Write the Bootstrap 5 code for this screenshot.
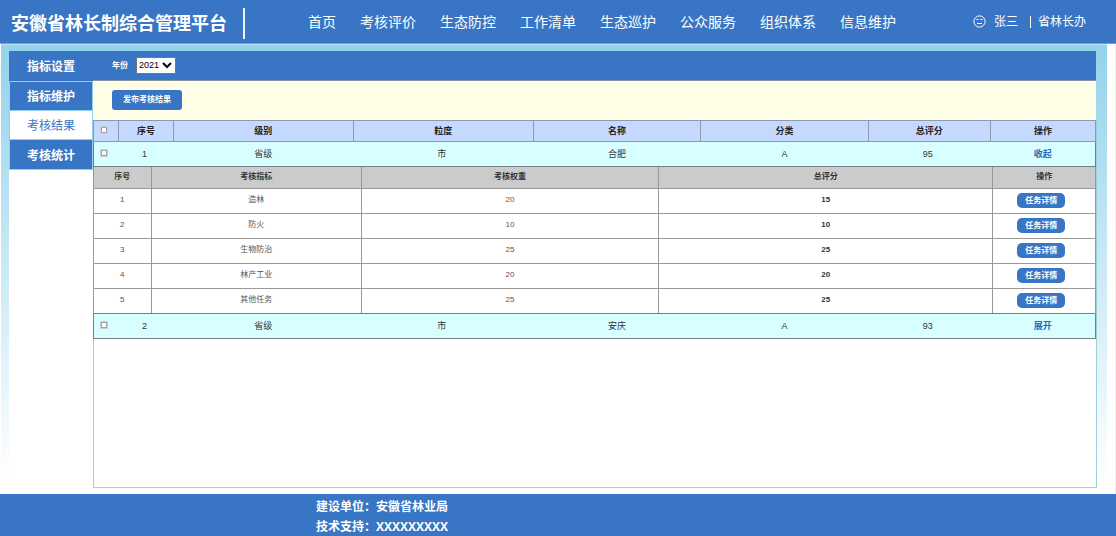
<!DOCTYPE html>
<html lang="zh-CN">
<head>
<meta charset="utf-8">
<meta name="viewport" content="width=device-width, initial-scale=1">
<title>安徽省林长制综合管理平台</title>
<link href="https://cdn.jsdelivr.net/npm/bootstrap@5.3.0/dist/css/bootstrap.min.css" rel="stylesheet">
<style>
  :root { --brand: #3876c5; --line: #777c80; }
  body { font-family: "Liberation Sans", "Noto Sans CJK SC", sans-serif; font-size: 9px; line-height: 12px; color: #333; }
  a { text-decoration: none; }
  .brand-bg { background: var(--brand); color: #fff; }

  .site-header { height: 44px; border-bottom: 1px solid #8a9bb5; padding: 0 30px 0 11px; }
  .site-title { font-size: 18px; line-height: 24px; font-weight: 700; margin: 5px 0 0; }
  .title-rule { width: 2px; height: 31px; background: #eaf4ff; margin: 3px 63px 0 16px; }
  .main-nav { gap: 24px; font-size: 14px; line-height: 20px; }
  .main-nav a { color: #fff; white-space: nowrap; }
  .user-info { font-size: 12px; line-height: 16px; white-space: nowrap; }
  .user-rule { width: 1px; height: 12px; background: #fff; margin: 0 7px 0 12px; }

  .stage { background: linear-gradient(#93d3ec, #fff 97%); border-top: 1px solid #b9e1f1; margin: 0 8px 0 1px; padding: 6px 11px 6px 8px; }
  .page-edge { border-right: 1px solid #eee; }
  .side-menu { width: 84px; background: #fff; font-size: 12px; line-height: 16px; }
  .side-menu a { display: flex; align-items: center; justify-content: center; height: 29px; padding-top: 2px; font-weight: 700; color: #fff; background: var(--brand); border: 1px solid #93cfee; border-top-width: 0; }
  .side-menu a:first-child { border-color: var(--brand) var(--brand) #93cfee; height: 31px; }
  .side-menu a.current { background: #fff; color: var(--brand); font-weight: 400; }
  .side-menu a:last-child { height: 30px; }

  .content-pane { min-width: 0; background: #fff; }
  .filter-bar { height: 30px; padding: 0 19px; gap: 8px; border-bottom: 1px solid #8793a0; }
  .filter-bar label { font-size: 8px; font-weight: 700; }
  .filter-bar select { appearance: none; width: 40px; height: 17px; font-size: 9px; line-height: 15px; padding: 0 2px; border: 1px solid #777; color: #000;
    background: #fff url("data:image/svg+xml,%3Csvg xmlns='http://www.w3.org/2000/svg' viewBox='0 0 10 7' fill='none' stroke='%23000' stroke-width='2'%3E%3Cpath d='M1 1l4 4 4-4'/%3E%3C/svg%3E") no-repeat right 3px center / 10px 7px; }
  .tool-bar { height: 39px; background: #ffffe8; padding: 0 19px 2px; }
  .publish-btn { font-size: 8px; line-height: 12px; font-weight: 700; color: #fff; background: var(--brand); border: 0; border-radius: 3px; padding: 4px 10px; width: 70px; height: 20px; white-space: nowrap; }
  .results { border: solid #9dd0dc; border-width: 0 1px 1px; margin-right: -1px; }

  .grid-table { width: 100%; table-layout: fixed; border-collapse: collapse; text-align: center; }
  .grid-table th, .grid-table td { padding: 0; vertical-align: middle; }
  .outer-table { margin: 0 0 0 -1px; width: calc(100% + 1px); }
  .outer-table > thead th { height: 21px; background: #c5d9ff; border: 1px solid #8f99ad; color: #222; }
  .group-row > td { height: 25px; background: #d8ffff; border: solid var(--line); border-width: 1px 0; }
  .group-row > td:first-child { border-left-width: 1px; }
  .group-row > td:last-child { border-right-width: 1px; }
  .outer-table .group-row .num { padding-right: 3px; }
  .group-row a { color: #2a6abf; font-weight: 700; }
  .outer-table .detail-cell { border: solid #999; border-width: 0 1px; }
  .inner-table { font-size: 8px; color: #555; background: #fff; }
  .inner-table th { height: 21px; background: #cbcbcb; color: #333; }
  .inner-table td { height: 25px; }
  .inner-table tbody td { padding-bottom: 1px; }
  .inner-table th, .inner-table td { border: 1px solid #999; }
  .inner-table thead th { border-top: 0; }
  .inner-table tbody tr:last-child td { border-bottom: 0; }
  .inner-table tr > :first-child { border-left: 0; }
  .inner-table tr > :last-child { border-right: 0; }
  .inner-table .total-score { font-weight: 700; color: #333; }
  .inner-table tbody td:last-child { padding-right: 6px; }
  .detail-btn { display: block; width: 48px; height: 15px; margin: 0 auto; padding: 0; font-size: 8px; line-height: 15px; color: #fff; background: var(--brand); border: 0; border-radius: 5px; font-weight: 700; }
  .pick { appearance: none; display: block; width: 6px; height: 6px; margin: 0 0 3px 7px; background: #fff; border: 1px solid #a3a3a3; box-shadow: 0 0 0 1px #cdd1d1; }
  .pick:checked { background: var(--brand); }

  .w-pick { width: 2.5%; } .w-no { width: 5.5%; } .w-level { width: 17.9%; } .w-grain { width: 18%; }
  .w-name { width: 16.7%; } .w-kind { width: 16.7%; } .w-score { width: 12.2%; } .w-act { width: 10.5%; }
  .n-no { width: 5.7%; } .n-item { width: 21%; } .n-weight { width: 29.7%; } .n-score { width: 33.4%; } .n-act { width: 10.2%; }

  .site-footer { height: 42px; padding: 4px 0 0 316px; font-size: 12px; line-height: 19px; font-weight: 700; }
  .site-footer span { font-family: "Open Sans", sans-serif; }
</style>
</head>
<body class="d-flex flex-column min-vh-100 bg-white">

<header class="site-header brand-bg d-flex align-items-center">
  <h1 class="site-title text-nowrap">安徽省林长制综合管理平台</h1>
  <div class="title-rule"></div>
  <nav class="main-nav d-flex">
    <a href="#">首页</a>
    <a href="#">考核评价</a>
    <a href="#">生态防控</a>
    <a href="#">工作清单</a>
    <a href="#">生态巡护</a>
    <a href="#">公众服务</a>
    <a href="#">组织体系</a>
    <a href="#">信息维护</a>
  </nav>
  <div class="user-info d-flex align-items-center ms-auto">
    <svg class="me-1" width="13" height="13" viewBox="0 0 13 13" fill="none" stroke="#fff" aria-hidden="true">
      <circle cx="6.5" cy="6.5" r="5.6"/>
      <path d="M3.5 4.5h2M7.5 4.5h2M4 8.5h5"/>
    </svg>
    <span class="ms-1">张三</span>
    <div class="user-rule"></div>
    <span>省林长办</span>
  </div>
</header>

<div class="page-edge flex-grow-1 d-flex flex-column">
<div class="stage flex-grow-1 d-flex">
  <nav class="side-menu flex-shrink-0">
    <a href="#">指标设置</a>
    <a href="#">指标维护</a>
    <a href="#" class="current" aria-current="page">考核结果</a>
    <a href="#">考核统计</a>
  </nav>

  <main class="content-pane flex-grow-1 d-flex flex-column">
    <div class="filter-bar brand-bg d-flex align-items-center">
      <label for="year">年份</label>
      <select id="year"><option>2021</option></select>
    </div>
    <div class="tool-bar d-flex align-items-center">
      <button type="button" class="publish-btn">发布考核结果</button>
    </div>

    <div class="results flex-grow-1">
      <table class="grid-table outer-table">
        <colgroup><col class="w-pick"><col class="w-no"><col class="w-level"><col class="w-grain"><col class="w-name"><col class="w-kind"><col class="w-score"><col class="w-act"></colgroup>
        <thead>
          <tr>
            <th><input type="checkbox" class="pick" aria-label="全选"></th>
            <th>序号</th><th>级别</th><th>粒度</th><th>名称</th><th>分类</th><th>总评分</th><th>操作</th>
          </tr>
        </thead>
        <tbody>
          <tr class="group-row">
            <td><input type="checkbox" class="pick" aria-label="合肥"></td>
            <td class="num">1</td><td>省级</td><td class="num">市</td><td>合肥</td><td>A</td><td class="num">95</td><td><a href="#">收起</a></td>
          </tr>
          <tr>
            <td colspan="8" class="detail-cell">
              <table class="grid-table inner-table">
                <colgroup><col class="n-no"><col class="n-item"><col class="n-weight"><col class="n-score"><col class="n-act"></colgroup>
                <thead>
                  <tr><th>序号</th><th>考核指标</th><th>考核权重</th><th>总评分</th><th>操作</th></tr>
                </thead>
                <tbody>
                  <tr><td>1</td><td>造林</td><td>20</td><td class="total-score">15</td><td><button type="button" class="detail-btn">任务详情</button></td></tr>
                  <tr><td>2</td><td>防火</td><td>10</td><td class="total-score">10</td><td><button type="button" class="detail-btn">任务详情</button></td></tr>
                  <tr><td>3</td><td>生物防治</td><td>25</td><td class="total-score">25</td><td><button type="button" class="detail-btn">任务详情</button></td></tr>
                  <tr><td>4</td><td>林产工业</td><td>20</td><td class="total-score">20</td><td><button type="button" class="detail-btn">任务详情</button></td></tr>
                  <tr><td>5</td><td>其他任务</td><td>25</td><td class="total-score">25</td><td><button type="button" class="detail-btn">任务详情</button></td></tr>
                </tbody>
              </table>
            </td>
          </tr>
          <tr class="group-row">
            <td><input type="checkbox" class="pick" aria-label="安庆"></td>
            <td class="num">2</td><td>省级</td><td class="num">市</td><td>安庆</td><td>A</td><td class="num">93</td><td><a href="#">展开</a></td>
          </tr>
        </tbody>
      </table>
    </div>
  </main>
</div>
</div>

<footer class="site-footer brand-bg">
  <div>建设单位：安徽省林业局</div>
  <div>技术支持：<span>XXXXXXXXX</span></div>
</footer>

<script src="https://cdn.jsdelivr.net/npm/bootstrap@5.3.0/dist/js/bootstrap.bundle.min.js"></script>
</body>
</html>
